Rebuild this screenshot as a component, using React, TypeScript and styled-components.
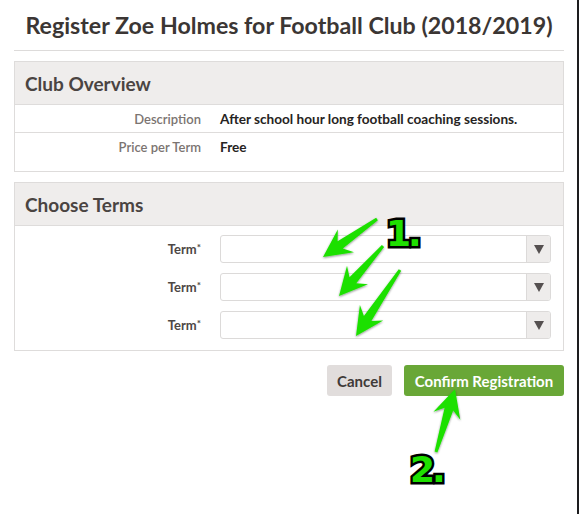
import React from "react";
import styled, { createGlobalStyle } from "styled-components";

const GlobalStyle = createGlobalStyle`
  html, body {
    margin: 0;
    padding: 0;
    background: #ffffff;
  }
  body {
    font-family: Lato, "Noto Sans", sans-serif;
    color: #3b3634;
  }
  * {
    box-sizing: border-box;
  }
`;

type Pt = [number, number];

// builds a tapered arrow polygon from tail to tip
const arrowPoints = (
  tail: Pt,
  tip: Pt,
  headLen: number,
  headW: number,
  shaftW: number,
  tailW: number,
) => {
  const dx = tip[0] - tail[0];
  const dy = tip[1] - tail[1];
  const len = Math.hypot(dx, dy);
  const ux = dx / len;
  const uy = dy / len;
  const nx = -uy;
  const ny = ux;
  const bx = tip[0] - ux * headLen;
  const by = tip[1] - uy * headLen;
  const pts: Pt[] = [
    [tail[0] + (nx * tailW) / 2, tail[1] + (ny * tailW) / 2],
    [bx + ux * 4 + (nx * shaftW) / 2, by + uy * 4 + (ny * shaftW) / 2],
    [bx - ux * 3 + (nx * headW) / 2, by - uy * 3 + (ny * headW) / 2],
    tip,
    [bx - ux * 3 - (nx * headW) / 2, by - uy * 3 - (ny * headW) / 2],
    [bx + ux * 4 - (nx * shaftW) / 2, by + uy * 4 - (ny * shaftW) / 2],
    [tail[0] - (nx * tailW) / 2, tail[1] - (ny * tailW) / 2],
  ];
  return pts.map((p) => `${p[0].toFixed(1)},${p[1].toFixed(1)}`).join(" ");
};

const arrows: { tail: Pt; tip: Pt }[] = [
  { tail: [377, 219], tip: [323, 257] },
  { tail: [383, 246], tip: [339, 296] },
  { tail: [400, 270], tip: [356, 336] },
  { tail: [436, 452], tip: [455, 389] },
];

const TermSelect = () => (
  <SSelect>
    <SSelectValue />
    <SSelectButton>
      <svg width="10" height="9" viewBox="0 0 10 9">
        <polygon points="0,0 10,0 5,9" fill="#555050" />
      </svg>
    </SSelectButton>
  </SSelect>
);

export default function App() {
  return (
    <>
      <GlobalStyle />
      <SPage>
        <STitle>Register Zoe Holmes for Football Club (2018/2019)</STitle>
        <SRule />
        <SPanel>
          <SPanelHeader>Club Overview</SPanelHeader>
          <SOverview>
            <SInfoRow>
              <SInfoLabel>Description</SInfoLabel>
              <SInfoValue>After school hour long football coaching sessions.</SInfoValue>
            </SInfoRow>
            <SInfoRow $last>
              <SInfoLabel>Price per Term</SInfoLabel>
              <SInfoValue>Free</SInfoValue>
            </SInfoRow>
          </SOverview>
        </SPanel>
        <SPanel>
          <SPanelHeader>Choose Terms</SPanelHeader>
          <STermList>
            {[1, 2, 3].map((n) => (
              <STermRow key={n}>
                <STermLabel>
                  Term<sup>*</sup>
                </STermLabel>
                <TermSelect />
              </STermRow>
            ))}
          </STermList>
        </SPanel>
        <SActions>
          <SButton type="button" $variant="cancel">
            Cancel
          </SButton>
          <SButton type="button" $variant="confirm">
            Confirm Registration
          </SButton>
        </SActions>

        <SAnnotations width="577" height="514" viewBox="0 0 577 514">
          <defs>
            <filter id="shade" x="-20%" y="-20%" width="140%" height="140%">
              <feDropShadow dx="0" dy="1" stdDeviation="1.2" floodColor="#000" floodOpacity="0.45" />
            </filter>
          </defs>
          {arrows.map((a, i) => (
            <polygon
              key={i}
              points={arrowPoints(a.tail, a.tip, 25, 28, 9, 3)}
              fill="#1fe000"
              filter="url(#shade)"
            />
          ))}
        </SAnnotations>
        <SStep style={{ left: 386, top: 214 }}>1.</SStep>
        <SStep style={{ left: 410, top: 450 }}>2.</SStep>
      </SPage>
    </>
  );
}

const SPage = styled.div`
  position: relative;
  width: 579px;
  height: 514px;
  padding: 0 13px 0 14px;
  border-right: 2px solid #1d1d1f;
  overflow: hidden;
`;

const STitle = styled.h1`
  margin: 0;
  padding: 9px 0 0;
  height: 50px;
  font-size: 23.2px;
  line-height: 32px;
  font-weight: 700;
  text-align: center;
  color: #3b3634;
`;

const SRule = styled.hr`
  margin: 0 0 10px;
  border: 0;
  border-top: 1px solid #dddbda;
`;

const SPanel = styled.section`
  border: 1px solid #dedcdb;
  margin-bottom: 10px;
`;

const SPanelHeader = styled.h2`
  margin: 0;
  height: 43px;
  padding: 0 10px;
  display: flex;
  align-items: center;
  background: #efedec;
  border-bottom: 1px solid #dedcdb;
  font-size: 19px;
  font-weight: 700;
  color: #4a4442;
`;

const SOverview = styled.div`
  display: flex;
  flex-direction: column;
  padding-bottom: 11px;
`;

const SInfoRow = styled.div<{ $last?: boolean }>`
  display: grid;
  grid-template-columns: 186px 1fr;
  column-gap: 19px;
  padding: 6px 0 5px;
  border-bottom: ${({ $last }) => ($last ? "0" : "1px solid #dedcdb")};
  font-size: 13px;
  line-height: 16px;
`;

const SInfoLabel = styled.div`
  text-align: right;
  color: #7b7471;
  font-weight: 600;
`;

const SInfoValue = styled.div`
  color: #262322;
  font-weight: 700;
  font-size: 13.6px;
`;

const STermList = styled.div`
  display: flex;
  flex-direction: column;
  gap: 10px;
  padding: 9px 12px 11px 0;
`;

const STermRow = styled.div`
  display: grid;
  grid-template-columns: 186px 1fr;
  column-gap: 19px;
  align-items: center;
`;

const STermLabel = styled.label`
  text-align: right;
  font-size: 13px;
  font-weight: 700;
  color: #4d4745;
  & sup {
    font-size: 10px;
    vertical-align: 3px;
    line-height: 0;
  }
`;

const SSelect = styled.div`
  display: flex;
  height: 28px;
  border: 1px solid #dcdad9;
  border-radius: 3px;
  overflow: hidden;
  background: #ffffff;
`;

const SSelectValue = styled.div`
  flex: 1;
`;

const SSelectButton = styled.div`
  width: 24px;
  display: flex;
  align-items: center;
  justify-content: center;
  background: #eeeceb;
  border-left: 1px solid #dcdad9;
`;

const SActions = styled.div`
  display: flex;
  justify-content: flex-end;
  gap: 12px;
  margin-top: 14px;
`;

const SButton = styled.button<{ $variant: "cancel" | "confirm" }>`
  height: 31px;
  padding: 0 8px;
  border: 0;
  border-radius: 3px;
  font-family: Lato, "Noto Sans", sans-serif;
  font-size: 15px;
  font-weight: 700;
  cursor: pointer;
  background: ${({ $variant }) => ($variant === "confirm" ? "#69a737" : "#e1dddc")};
  color: ${({ $variant }) => ($variant === "confirm" ? "#ffffff" : "#3f3a38")};
  width: ${({ $variant }) => ($variant === "confirm" ? "160px" : "65px")};
`;

const SAnnotations = styled.svg`
  position: absolute;
  left: 0;
  top: 0;
  pointer-events: none;
`;

const SStep = styled.div`
  position: absolute;
  font-family: "DejaVu Sans", sans-serif;
  font-size: 36px;
  line-height: 40px;
  font-weight: 700;
  letter-spacing: -3px;
  color: #1fe000;
  -webkit-text-stroke: 5px #000;
  paint-order: stroke fill;
  pointer-events: none;
`;
